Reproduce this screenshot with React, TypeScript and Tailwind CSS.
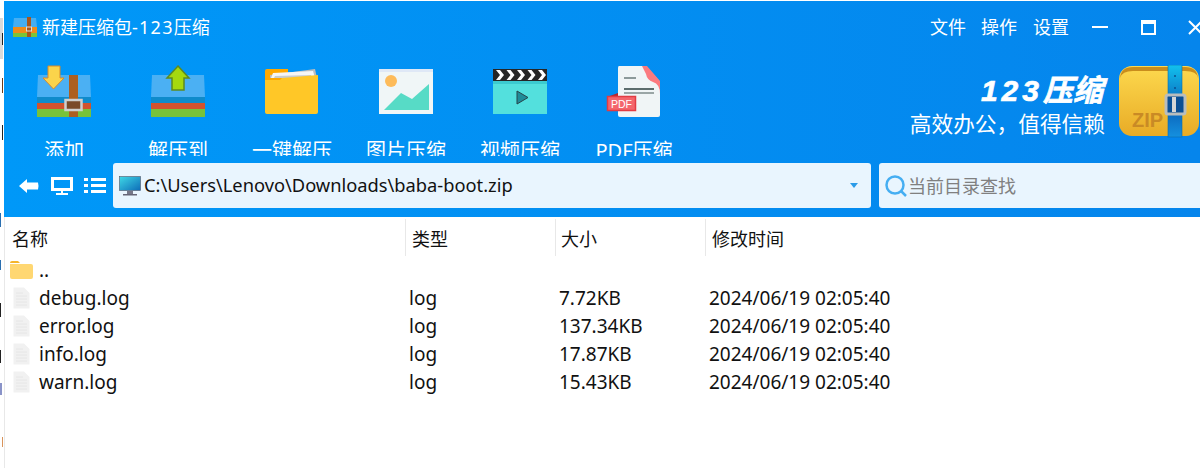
import React from 'react';

const font = "font-['Noto_Sans','Noto_Sans_CJK_SC',sans-serif]";

const BoxIcon = ({ belt, arrow }: { belt?: boolean; arrow: 'down' | 'up' }) => (
  <svg width="56" height="56" viewBox="0 0 56 56">
    <path d="M2 11 H54 L55 33 H1 Z" fill="#4bb0f3" />
    <rect x="1" y="33" width="54" height="6" fill="#0f8bcb" />
    <rect x="1" y="39" width="54" height="6" fill="#d2522e" />
    <rect x="1" y="45" width="54" height="8" fill="#78c23a" />
    {belt && <rect x="33" y="11" width="9" height="42" fill="#ad5f20" />}
    {belt && <rect x="29.5" y="36" width="16" height="10" fill="#7a4a2a" stroke="#cfcfcf" strokeWidth="2.5" />}
    {arrow === 'down' ? (
      <path d="M12 2 H24 V14 H28 L17.5 25 L7 14 H12 Z" fill="#fbd44b" stroke="#d98a2b" strokeWidth="1" />
    ) : (
      <path d="M28 2 L39 14 H34 V26 H22 V14 H17 Z" fill="#a5d90f" stroke="#5d8a20" strokeWidth="1.5" />
    )}
  </svg>
);

const FolderIcon = () => (
  <svg width="56" height="56" viewBox="0 0 56 56">
    <path d="M1 7 Q1 5 3 5 H24 V17 H1 Z" fill="#ffa800" />
    <path d="M6 11 L51 5 L53 14 H6 Z" fill="#bdbdbd" />
    <path d="M7 14 L9 9 L49 7 L51 14 Z" fill="#f6f6f6" />
    <path d="M10 14 L11 12 L47 11 L48 14 Z" fill="#c9cdd0" />
    <path d="M1 16 H16 L18 14 L54 11 V48 Q54 50 52 50 H3 Q1 50 1 48 Z" fill="#ffc727" />
  </svg>
);

const PictureIcon = () => (
  <svg width="56" height="56" viewBox="0 0 56 56">
    <rect x="1" y="5" width="54" height="45" fill="#f0f6f7" />
    <rect x="1" y="5" width="54" height="3" fill="#dfe8f6" />
    <circle cx="13" cy="17" r="6" fill="#fdbb5a" />
    <path d="M6 46 L23 29 L34 35 L51 20 V46 Z" fill="#57dbc6" />
  </svg>
);

const VideoIcon = () => (
  <svg width="56" height="56" viewBox="0 0 56 56">
    <rect x="1" y="5" width="54" height="45" fill="#53e0dd" />
    <rect x="1" y="5" width="54" height="12" fill="#262626" />
    <path d="M4 6 h4 l4 5 l-4 5 h-4 l4 -5 Z M14.5 6 h4 l4 5 l-4 5 h-4 l4 -5 Z M25 6 h4 l4 5 l-4 5 h-4 l4 -5 Z M35.5 6 h4 l4 5 l-4 5 h-4 l4 -5 Z M46 6 h4 l4 5 l-4 5 h-4 l4 -5 Z" fill="#fff" />
    <rect x="1" y="17" width="54" height="3" fill="#3ccbd0" />
    <path d="M25 27 L36 33.5 L25 40 Z" fill="#1f8b98" stroke="#28434a" strokeWidth="1" />
  </svg>
);

const PdfIcon = () => (
  <svg width="56" height="56" viewBox="0 0 56 56">
    <path d="M13 2 Q12 2 12 4 V51 Q12 53 14 53 H52 Q54 53 54 51 V18 L40 2 Z" fill="#f0f5f6" />
    <path d="M36 2 H41 L54 17 V30 Q54 20 47 18 Q41 16 40 10 Z" fill="#fb7a7f" />
    <rect x="18" y="13" width="12" height="2" fill="#8c9a9a" />
    <rect x="18" y="24" width="30" height="2" fill="#5c6d6d" />
    <rect x="18" y="28" width="30" height="2" fill="#9aa6a6" />
    <path d="M1 33 L12 29 V33 Z" fill="#b5272c" />
    <rect x="1.5" y="32.5" width="28" height="14" fill="#f4666c" stroke="#e23c43" strokeWidth="1.5" />
    <text x="15.5" y="43.5" textAnchor="middle" fontSize="10.5" fill="#fff" fontFamily="Liberation Sans">PDF</text>
  </svg>
);

const ZipLogo = () => (
  <svg width="80" height="74" viewBox="0 0 80 74">
    <defs>
      <linearGradient id="zipGold" x1="0" y1="0" x2="0" y2="1">
        <stop offset="0" stopColor="#fdd94e" />
        <stop offset="1" stopColor="#e8ab26" />
      </linearGradient>
      <linearGradient id="zipBelt" x1="0" y1="0" x2="0" y2="1">
        <stop offset="0" stopColor="#12c1ee" />
        <stop offset="0.6" stopColor="#0a62b8" />
        <stop offset="1" stopColor="#1590df" />
      </linearGradient>
    </defs>
    <rect x="0" y="1" width="80" height="70" rx="13" fill="url(#zipGold)" />
    <path d="M1 13 Q2 2 14 2 H66 Q78 2 79 13 Q78 6 66 6 H14 Q3 6 1 13 Z" fill="#c98d1c" />
    <text x="13" y="62" fontSize="20" fontWeight="700" fill="#c98a25" fontFamily="Liberation Sans">ZIP</text>
    <rect x="49" y="0" width="14" height="72" fill="url(#zipBelt)" stroke="#0d6cb0" strokeWidth="0.6" />
    <circle cx="56" cy="11" r="1" fill="#0a4f8f" />
    <circle cx="56" cy="23" r="1" fill="#0a4f8f" />
    <rect x="47" y="30" width="19" height="19" rx="2" fill="#0b4f94" stroke="#b9bdbd" strokeWidth="3" />
    <rect x="53" y="32" width="4" height="15" fill="#d6d6d6" />
  </svg>
);

const tools = [
  { label: '添加', icon: <BoxIcon belt arrow="down" /> },
  { label: '解压到', icon: <BoxIcon arrow="up" /> },
  { label: '一键解压', icon: <FolderIcon /> },
  { label: '图片压缩', icon: <PictureIcon /> },
  { label: '视频压缩', icon: <VideoIcon /> },
  { label: 'PDF压缩', icon: <PdfIcon /> },
];

const files = [
  { name: 'debug.log', size: '7.72KB' },
  { name: 'error.log', size: '137.34KB' },
  { name: 'info.log', size: '17.87KB' },
  { name: 'warn.log', size: '15.43KB' },
];

const FileIcon = () => (
  <svg width="17" height="22" viewBox="0 0 17 22">
    <path d="M0.5 0.5 H11 L16.5 6 V21.5 H0.5 Z" fill="#f1f1f1" />
    <path d="M3 6 H10 M3 9 H14 M3 12 H14 M3 15 H14 M3 18 H14" stroke="#e6e6e6" strokeWidth="1" />
  </svg>
);

const App: React.FC = () => {
  return (
    <div className={`w-[1200px] h-[468px] overflow-hidden bg-white flex ${font} text-[#111]`}>
      {/* sliver of the window behind */}
      <div className="w-1 shrink-0 flex flex-col items-start">
        <div className="mt-[18px] w-[3px] h-[41px] bg-[#d9d9d9] flex items-center justify-end">
          <div className="w-px h-[12px] bg-[#222]" />
        </div>
        <div className="mt-[19px] ml-[2px] w-px h-[15px] bg-[#6b3a1a]" />
        <div className="mt-[32px] ml-[2px] w-px h-[15px] bg-[#222]" />
        <div className="mt-[73px] w-px h-[14px] bg-[#2a6fb0]" />
        <div className="mt-[33px] w-px h-[10px] bg-[#2a6fb0]" />
        <div className="mt-[33px] w-px h-[14px] bg-[#222]" />
        <div className="mt-[33px] w-px h-[13px] bg-[#222]" />
        <div className="mt-[20px] w-[2px] h-[12px] bg-[#8a93c8]" />
        <div className="mt-[42px] ml-[2px] w-px h-[10px] bg-[#d9935a]" />
      </div>
      <div className="flex-1 min-w-0 flex flex-col">
        <div className="mt-px h-[216px] bg-gradient-to-r from-[#0098f8] to-[#0585ec] flex flex-col text-white">
          <div className="h-[52px] flex items-center pl-[9px]">
            <svg className="mt-[-1px]" width="24" height="20" viewBox="0 0 24 20">
              <path d="M1 1 H23 L24 10 H0 Z" fill="#45aef2" />
              <rect y="10" width="24" height="6" fill="#f08c1a" />
              <rect y="16" width="24" height="4" fill="#79c43a" />
              <rect x="14" y="0" width="4" height="20" fill="#a8561e" />
              <rect x="13.5" y="10" width="5" height="4" fill="none" stroke="#ddd" />
            </svg>
            <span className="ml-[5px] text-[18px] leading-none">
              新建压缩包<span className="tracking-[1.25px]">-123</span>压缩
            </span>
            <div className="ml-auto flex items-center text-[18px] leading-none">
              <span>文件</span>
              <span className="ml-[15px]">操作</span>
              <span className="ml-[16px]">设置</span>
              <div className="ml-[23px] w-4 h-[2px] bg-white" />
              <div className="ml-[33px] w-[15px] h-[15px] border-2 border-t-[4px] border-white" />
              <svg className="ml-[32px]" width="12" height="15" viewBox="0 0 12 15">
                <path d="M1 1 L14 14 M14 1 L1 14" stroke="#fff" strokeWidth="2" fill="none" />
              </svg>
            </div>
          </div>
          <div className="h-[103px] flex items-start overflow-hidden">
            <div className="flex pl-[3px] pt-[11px]">
              {tools.map((t) => (
                <div key={t.label} className="w-[114px] flex flex-col items-center">
                  {t.icon}
                  <span className="mt-[19px] text-[20px] leading-[24px] whitespace-nowrap">{t.label}</span>
                </div>
              ))}
            </div>
            <div className="ml-auto flex items-start pr-px pt-[12px]">
              <div className="flex flex-col items-end mr-[14px] pt-[11px]">
                <span className="text-[30px] font-bold italic leading-[30px] mr-[2px] [-webkit-text-stroke:0.7px_white] font-['Liberation_Sans','Noto_Sans_CJK_SC',sans-serif]">
                  <span className="tracking-[4px]">123</span>压缩
                </span>
                <span className="mt-[3px] text-[21.7px] leading-[30px]">高效办公，值得信赖</span>
              </div>
              <ZipLogo />
            </div>
          </div>
          <div className="flex items-start h-[61px] pl-[15px] pt-[7px]">
            <div className="h-[45px] flex items-center">
              <svg width="20" height="14" viewBox="0 0 20 14" fill="#fff">
                <path d="M0 7 L8 0 V3.5 H19 Q20 7 19 10.5 H8 V14 Z" />
              </svg>
              <svg className="ml-[12px]" width="22" height="18" viewBox="0 0 22 18" fill="none" stroke="#fff">
                <rect x="1.5" y="1.5" width="19" height="11" strokeWidth="3" />
                <path d="M11 13 V16 M5 17 H17" strokeWidth="2" />
              </svg>
              <svg className="ml-[11px]" width="22" height="16" viewBox="0 0 22 16" fill="#fff">
                <rect x="0" y="0" width="4" height="3" /><rect x="7" y="0" width="15" height="3" />
                <rect x="0" y="6" width="4" height="3" /><rect x="7" y="6" width="15" height="3" />
                <rect x="0" y="12" width="4" height="3" /><rect x="7" y="12" width="15" height="3" />
              </svg>
            </div>
            <div className="ml-[7px] w-[758px] h-[45px] rounded-[3px] bg-[#e9f5fe] flex items-center pl-[6px] pr-[13px] text-[#111]">
              <svg width="22" height="20" viewBox="0 0 22 20">
                <defs>
                  <linearGradient id="scr" x1="0" y1="0" x2="1" y2="1">
                    <stop offset="0" stopColor="#3fd8e6" />
                    <stop offset="1" stopColor="#0d6cb8" />
                  </linearGradient>
                </defs>
                <rect x="0.5" y="0.5" width="21" height="14" fill="url(#scr)" stroke="#556" strokeWidth="0.6" />
                <rect x="8" y="15" width="6" height="3" fill="#778" />
                <rect x="4" y="18" width="14" height="1.5" fill="#667" />
              </svg>
              <span className="ml-[3px] text-[18.3px] leading-none">C:\Users\Lenovo\Downloads\baba-boot.zip</span>
              <div className="ml-auto w-0 h-0 border-x-[4px] border-x-transparent border-t-[5px] border-t-[#2b9be8]" />
            </div>
            <div className="ml-2 flex-1 h-[45px] rounded-l-[3px] bg-[#e9f5fe] flex items-center pl-[6px]">
              <svg width="22" height="22" viewBox="0 0 22 22" fill="none" stroke="#45aef2" strokeWidth="2.5">
                <circle cx="10" cy="10" r="8.5" />
                <path d="M16 16 L21 21" />
              </svg>
              <span className="ml-px text-[18px] leading-none text-[#808080]">当前目录查找</span>
            </div>
          </div>
        </div>
        <div className="flex-1 border-l border-[#e8e8e8]">
          <div className="h-10 flex items-start pt-[2px] text-[18px] leading-none">
            <div className="w-[400px] h-[37px] pl-[7px] pt-[3px] flex items-center">名称</div>
            <div className="w-[150px] h-[37px] pl-[6px] pt-[3px] flex items-center border-l border-[#e8e8e8]">类型</div>
            <div className="w-[150px] h-[37px] pl-[5px] pt-[3px] flex items-center border-l border-[#e8e8e8]">大小</div>
            <div className="h-[37px] pl-[6px] pt-[3px] flex items-center border-l border-[#e8e8e8]">修改时间</div>
          </div>
          <div className="flex h-[27px] items-start pl-[5px] pt-1">
            <svg width="23" height="18" viewBox="0 0 23 18">
              <path d="M0 2 Q0 0 2 0 H8 L10 2 H0 Z" fill="#f5b52c" />
              <path d="M0 3 H21 Q23 3 23 5 V16 Q23 18 21 18 H2 Q0 18 0 16 Z" fill="#ffd772" />
            </svg>
            <span className="ml-[6px] text-[19px] leading-[18px]">..</span>
          </div>
          {files.map((f) => (
            <div key={f.name} className="h-7 flex items-center text-[19px] leading-none">
              <div className="w-[404px] flex items-center pl-2">
                <FileIcon />
                <span className="ml-[9px]">{f.name}</span>
              </div>
              <div className="w-[150px]">log</div>
              <div className="w-[150px]">{f.size}</div>
              <div>2024/06/19 02:05:40</div>
            </div>
          ))}
        </div>
      </div>
    </div>
  );
};

export default App;
